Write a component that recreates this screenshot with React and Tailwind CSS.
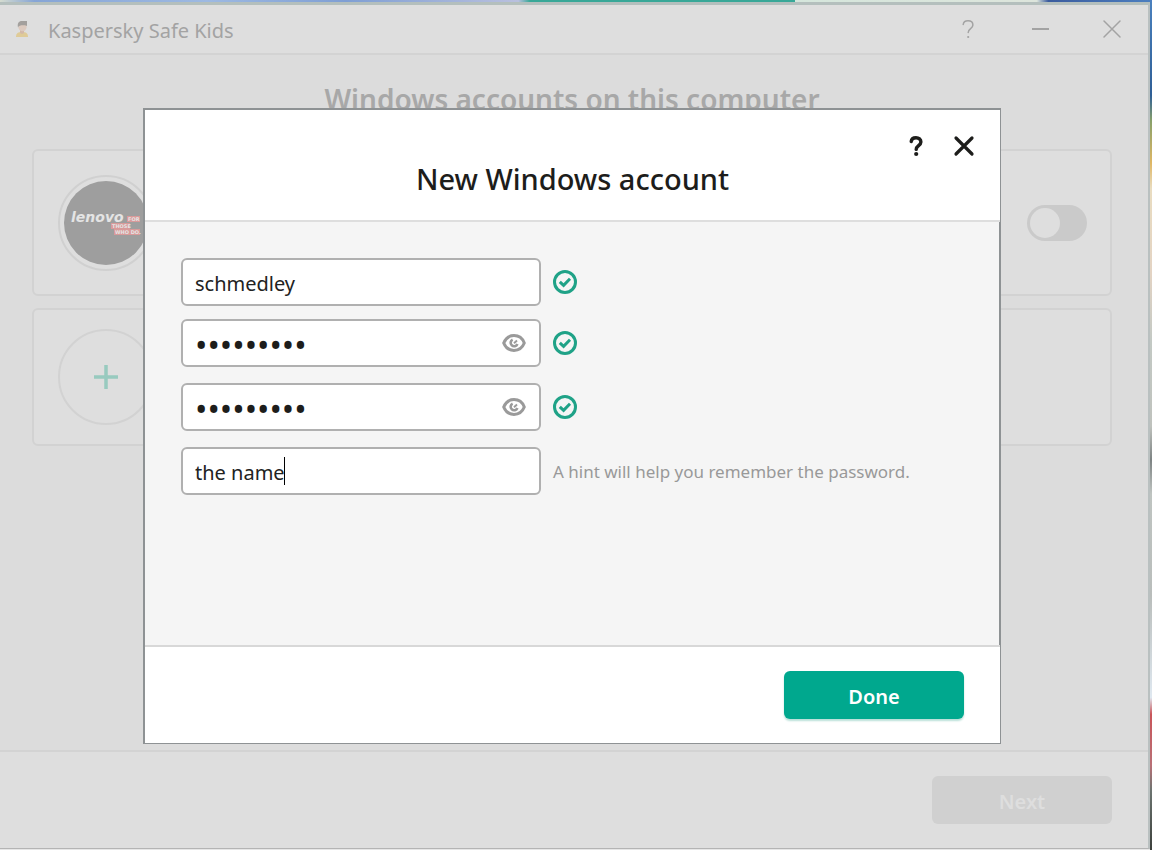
import React, { useState } from "react";

function CheckIcon() {
  return (
    <svg className="size-6 shrink-0" viewBox="0 0 24 24" fill="none" role="img" aria-label="Valid">
      <circle cx="12" cy="12" r="10.500" stroke="#1fa287" strokeWidth="3" />
      <path d="M6.800 11.800l3.800 3.600 6.400-6.600" stroke="#1fa287" strokeWidth="3" />
    </svg>
  );
}

function EyeIcon() {
  return (
    <svg className="h-5 w-6" viewBox="0 0 24 20" fill="none" aria-hidden="true">
      <path
        d="M1.700 10C3.600 5.200 7.500 2.600 12 2.600S20.400 5.200 22.300 10C20.400 14.800 16.500 17.400 12 17.400S3.600 14.800 1.700 10z"
        stroke="#9a9a9a"
        strokeWidth="3"
        strokeLinejoin="round"
      />
      <path d="M10.600 6.600A3.500 3.500 0 1 0 15.400 11" stroke="#9a9a9a" strokeWidth="2.600" />
      <path d="M12 10.200l3-2.600" stroke="#9a9a9a" strokeWidth="2" />
    </svg>
  );
}

function HelpIcon({ width, dot }) {
  return (
    <svg className="size-6" viewBox="0 0 24 24" fill="none" stroke="currentColor" strokeWidth={width} strokeLinecap="round" aria-hidden="true">
      <path d="M7.200 7.500C7.500 5 9.300 3.800 12 3.800c2.900 0 4.900 1.600 4.900 4.200 0 3.600-4.700 3.700-4.700 7.400" />
      <circle cx="12.200" cy="20" r={dot} fill="currentColor" stroke="none" />
    </svg>
  );
}

function CloseIcon({ width }) {
  return (
    <svg className="size-6" viewBox="0 0 24 24" stroke="currentColor" strokeWidth={width} strokeLinecap="round" aria-hidden="true">
      <path d="M4 4l16 16M20 4L4 20" />
    </svg>
  );
}

function KidIcon() {
  return (
    <svg className="h-[18px] w-[14px]" viewBox="0 0 14 18" aria-hidden="true">
      <path d="M1 17c0-4 2-5 6-5s6 1 6 5z" fill="#dfcb98" />
      <path d="M5 9.500h4v3.500l-2 1-2-1z" fill="#d3b9a9" />
      <circle cx="7.500" cy="7" r="4.200" fill="#dccabf" />
      <path d="M3 7.500c-.9-4 .6-6.500 4-6.500h5v5c-1.200-1-2.500-.8-4-.8-2.500 0-4.200.3-5 2.300z" fill="#a3a09d" />
    </svg>
  );
}

function LenovoAvatar() {
  return (
    <div className="flex size-24 shrink-0 items-center justify-center rounded-full border-2 border-[#d0d0d0]">
      <svg className="size-[84px]" viewBox="0 0 84 84" role="img" aria-label="Lenovo">
        <circle cx="42" cy="42" r="42" fill="#9e9e9e" />
        <g fill="#d99a9a">
          <rect x="63" y="35" width="13" height="6" />
          <rect x="47" y="42" width="19" height="6" />
          <rect x="50" y="48" width="26" height="6" />
        </g>
        <g className="font-['DejaVu_Sans',sans-serif] font-bold" fill="#e4e4e4">
          <text x="7" y="41" className="text-[14px] italic">lenovo</text>
          <g className="text-[5px]">
            <text x="64" y="40">FOR</text>
            <text x="48" y="47">THOSE</text>
            <text x="51" y="53">WHO DO.</text>
          </g>
        </g>
      </svg>
    </div>
  );
}

function Field({ label, value, onChange, caret }) {
  return (
    <label className="relative block w-[360px]">
      <span className="sr-only">{label}</span>
      <input
        type="text"
        value={value}
        onChange={(e) => onChange(e.target.value)}
        className="block h-12 w-full rounded-md border-2 border-[#b0b0b0] bg-white px-3 pt-1 text-xl text-[#222] outline-none"
      />
      {caret && <span className="absolute top-2.5 left-[103px] h-7 w-px bg-black" />}
    </label>
  );
}

function PasswordField({ label, value, onChange }) {
  const [shown, setShown] = useState(false);
  return (
    <div className="relative w-[360px]">
      <input
        type={shown ? "text" : "password"}
        aria-label={label}
        value={value}
        onChange={(e) => onChange(e.target.value)}
        className="block h-12 w-full rounded-md border-2 border-[#b0b0b0] bg-white pt-1 pr-12 pl-3 text-[33px] text-[#1d1d1b] outline-none"
      />
      <button
        type="button"
        aria-label="Show password"
        onClick={() => setShown(!shown)}
        className="absolute top-3.5 right-[15px]"
      >
        <EyeIcon />
      </button>
    </div>
  );
}

function Modal() {
  const [name, setName] = useState("schmedley");
  const [password, setPassword] = useState("123456789");
  const [confirm, setConfirm] = useState("123456789");
  const [hint, setHint] = useState("the name");

  return (
    <section role="dialog" aria-labelledby="modal-title" className="w-full max-w-[858px] border-t-2 border-r border-b border-l-2 border-[#8e9294] bg-white">
      <div className="border-b-2 border-[#dedede] pt-6 pb-[23px] text-[#1d1d1b]">
        <div className="flex justify-end gap-6 pr-6">
          <button type="button" aria-label="Help"><HelpIcon width={3.4} dot={2.1} /></button>
          <button type="button" aria-label="Close"><CloseIcon width={3.2} /></button>
        </div>
        <h2 id="modal-title" className="mt-[3px] text-center text-[29px] leading-9 font-medium">New Windows account</h2>
      </div>

      <form className="min-h-[423px] border-r border-[#8e9294] bg-[#f5f5f5] p-9">
        <div className="mb-[13px] flex items-center gap-3">
          <Field label="Account name" value={name} onChange={setName} />
          <CheckIcon />
        </div>
        <div className="flex flex-col gap-4">
          <div className="flex items-center gap-3">
            <PasswordField label="Password" value={password} onChange={setPassword} />
            <CheckIcon />
          </div>
          <div className="flex items-center gap-3">
            <PasswordField label="Confirm password" value={confirm} onChange={setConfirm} />
            <CheckIcon />
          </div>
          <div className="flex items-center gap-3">
            <Field label="Password hint" value={hint} onChange={setHint} caret />
            <p className="pt-0.5 text-[17px] text-[#999]">A hint will help you remember the password.</p>
          </div>
        </div>
      </form>

      <div className="flex justify-end border-t-2 border-[#d8d8d8] py-6 pr-9">
        <button type="button" className="h-12 w-[180px] rounded-md bg-[#00a88e] pt-1 text-xl font-semibold text-white shadow-[0_2px_2px_#b9e0d8]">
          Done
        </button>
      </div>
    </section>
  );
}

export default function App() {
  return (
    <div className="flex min-h-screen flex-col bg-[#e6e6e6] font-['Noto_Sans','Open_Sans',sans-serif]">
      {/* desktop behind the window */}
      <div className="h-0.5 bg-[linear-gradient(to_right,#d5dcd0_0,#86a5d6_3%,#9db9e2_18%,#7f9fd4_30%,#b9c0de_45%,#38a898_46%,#38a898_69%,#d5e6dc_69%,#dde5dc_90%,#3b5c9e_91%,#4c7fc0_100%)]" />
      <div className="flex flex-1">
        {/* window */}
        <div className="relative mb-px flex flex-1 flex-col border-t-3 border-r-2 border-b border-t-[#b4bfbd] border-r-[#b9c0c0] border-b-[#b4b4b4] bg-[#dcdcdc]">
          <header className="flex h-[50px] shrink-0 items-center border-b-2 border-[#d3d3d3] bg-[#dedede] pr-6 pl-[15px] text-[#a3a3a3]">
            <KidIcon />
            <span className="mt-1 ml-[19px] flex-1 text-xl">Kaspersky Safe Kids</span>
            <div className="flex gap-12">
              <button type="button" aria-label="Help"><HelpIcon width={1.5} dot={1.1} /></button>
              <button type="button" aria-label="Minimize">
                <svg className="size-6" viewBox="0 0 24 24" aria-hidden="true">
                  <path d="M4 12h17" stroke="currentColor" strokeWidth="2" />
                </svg>
              </button>
              <button type="button" aria-label="Close"><CloseIcon width={1.5} /></button>
            </div>
          </header>

          <main className="flex flex-1 flex-col pt-[26px] pr-9 pl-8">
            <h1 className="mb-8 text-center text-[28px] leading-9 font-semibold text-[#a8a8a8]">Windows accounts on this computer</h1>
            <div className="flex flex-col gap-3">
              <div className="flex h-[147px] items-center justify-between rounded-md border-2 border-[#d2d2d2] bg-[#dedede] pr-[23px] pl-6">
                <LenovoAvatar />
                <input
                  type="checkbox"
                  aria-label="Protect this account"
                  className="h-9 w-[60px] appearance-none rounded-full bg-[#cacaca] p-[3px] before:block before:size-[30px] before:rounded-full before:bg-[#dedede] checked:before:ml-auto"
                />
              </div>
              <div className="flex h-[138px] items-center rounded-md border-2 border-[#d2d2d2] bg-[#dedede] px-6">
                <button type="button" aria-label="Add account" className="flex size-24 items-center justify-center rounded-full border-2 border-[#d2d2d2]">
                  <svg className="size-6" viewBox="0 0 24 24" aria-hidden="true">
                    <path d="M12 0v24M0 12h24" stroke="#98cabf" strokeWidth="3.500" />
                  </svg>
                </button>
              </div>
            </div>
          </main>

          <footer className="flex justify-end border-t-2 border-[#d3d3d3] bg-[#dedede] py-6 pr-9">
            <button type="button" disabled className="h-12 w-[180px] rounded-md bg-[#d0d0d0] pt-1 text-xl font-semibold text-[#dedede]">
              Next
            </button>
          </footer>

          <div className="absolute inset-0 flex items-center justify-center pr-1 pb-0.5">
            <Modal />
          </div>
        </div>
        <div className="w-0.5 bg-[linear-gradient(to_bottom,#4a80bd_0,#2f5f96_11%,#88a06a_14%,#dfb765_19%,#e9dcc0_22%,#e3d3c3_32%,#c3c9c4_40%,#bfc2bd_50%,#7d8383_54%,#bfc4c1_58%,#b9bdbb_70%,#dfe8f0_82%,#c9555a_84%,#b97076_90%,#6c7470_93%,#3c403c_100%)]" />
      </div>
    </div>
  );
}
